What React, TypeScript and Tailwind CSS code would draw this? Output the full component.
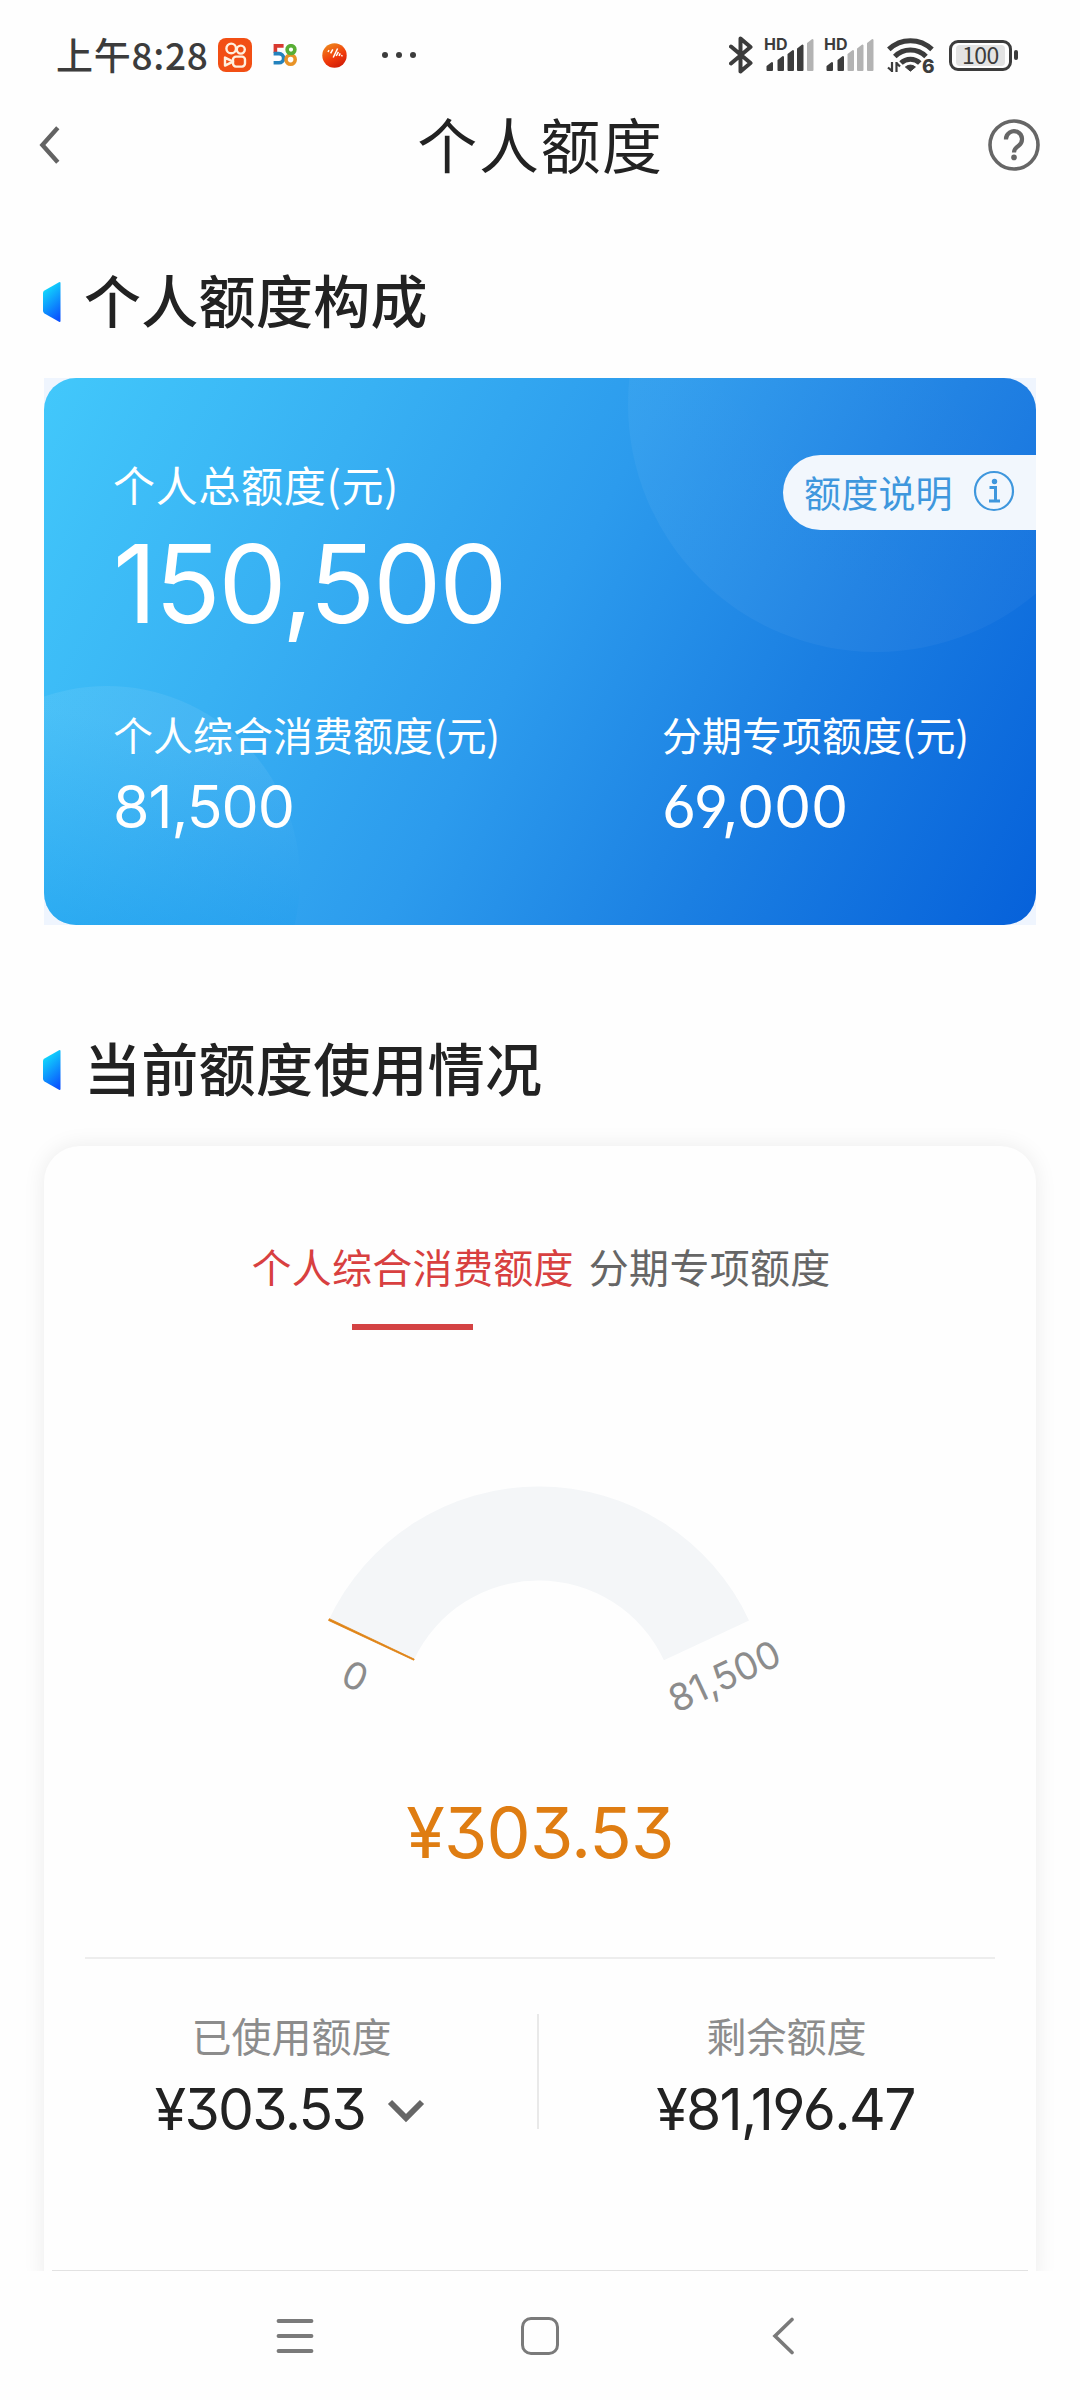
import { ChevronDown } from "lucide-react";

const cjk = "font-['Noto_Sans_CJK_SC',sans-serif]";
const num = "font-[Inter,'Noto_Sans_CJK_SC',sans-serif] [font-feature-settings:'cv03','cv04','cv09']";

const USED = 303.53;
const TOTAL = 81500;

function KuaishouIcon() {
  return (
    <svg width="34" height="34" viewBox="0 0 34 34" fill="none">
      <rect width="34" height="34" rx="8" fill="#f24f14" />
      <g stroke="#fff0de" strokeWidth="2.4">
        <circle cx="13.2" cy="10.4" r="4.8" />
        <circle cx="22.8" cy="11.6" r="4" />
        <rect x="15" y="18.6" width="12" height="10" rx="3" />
        <path d="M15 23.6 7 19.6v8Z" strokeLinejoin="round" />
      </g>
    </svg>
  );
}

function App58Icon() {
  return (
    <svg width="24" height="22" viewBox="0 0 24 22" fill="none" strokeWidth="3.6">
      <path d="M10.6 1.9H2.4V9" stroke="#d8392f" />
      <path d="M.6 9.6h5.4a4.6 4.6 0 0 1 0 9.2H.6" stroke="#2382bd" />
      <circle cx="17.6" cy="15.6" r="4.6" stroke="#e89327" />
      <circle cx="18" cy="5.6" r="3.9" stroke="#58ae35" />
    </svg>
  );
}

function BallIcon() {
  return (
    <svg width="25" height="25" viewBox="0 0 25 25">
      <defs>
        <linearGradient id="ball" x1="0.2" y1="0" x2="0.7" y2="1">
          <stop offset="0" stopColor="#ee8a1d" />
          <stop offset="0.6" stopColor="#f0380a" />
          <stop offset="1" stopColor="#cf1c08" />
        </linearGradient>
      </defs>
      <circle cx="12.5" cy="12.5" r="12.2" fill="url(#ball)" />
      <path d="m6 9 1-1.8M8.6 10.4l2.2-4M11.2 14.5l4.4-9M14.2 13l2.2-4.2M17 12.8l1.2-2.4M19.6 13.4l.6-1.2" stroke="#fff" strokeWidth="1.5" />
    </svg>
  );
}

function BluetoothIcon() {
  return (
    <svg width="24" height="38" viewBox="0 0 24 38" fill="none" stroke="#3c3c3c" strokeWidth="4" strokeLinejoin="round" strokeLinecap="round">
      <path d="M2 10.5 21.5 27 11.5 35.5V2.5L21.5 11 2 27.5" />
    </svg>
  );
}

const BARS = [
  { x: 2.5, y: 24 },
  { x: 13.5, y: 18 },
  { x: 23.5, y: 12 },
  { x: 33, y: 6.5 },
  { x: 43, y: 1 },
];

function Signal({ level }: { level: number }) {
  return (
    <div className="relative h-[34px] w-[50px]">
      <svg width="50" height="34" viewBox="0 0 50 34" strokeWidth="2" strokeLinejoin="round">
        {BARS.map((b, i) => (
          <path
            key={b.x}
            d={`M${b.x} 32V${b.y + 4.5}L${b.x + 4.5} ${b.y + 1}V32Z`}
            fill={i < level ? "#3c3c3c" : "#b3b3b3"}
            stroke={i < level ? "#3c3c3c" : "#b3b3b3"}
          />
        ))}
      </svg>
      <span className="absolute -left-px -top-[4px] font-[Inter,sans-serif] text-[16px] font-bold leading-[20px] text-[#3c3c3c]">HD</span>
    </div>
  );
}

function WifiIcon() {
  return (
    <div className="relative h-[38px] w-[48px]">
      <svg width="48" height="38" viewBox="0 0 48 38" fill="none">
        <g stroke="#3c3c3c" strokeWidth="5">
          <path d="M1.8 13.4a31 31 0 0 1 43.2 0" />
          <path d="M7.8 20.6a22 22 0 0 1 31.2 0" />
          <path d="M14 27a13.5 13.5 0 0 1 18.8 0" />
        </g>
        <path d="M23.4 35.2 18.4 31a7.5 7.5 0 0 1 10 0Z" fill="#3c3c3c" stroke="#3c3c3c" strokeLinejoin="round" />
        <path d="M5 26v10M1 31.5l4 3.5M9.5 36V26M13 30.5l-3.5-3.5" stroke="#3c3c3c" strokeWidth="2.2" />
      </svg>
      <span className="absolute left-[35px] top-[19px] font-[Inter,sans-serif] text-[19px] font-extrabold leading-[24px] text-[#3c3c3c]">6</span>
    </div>
  );
}

function Battery() {
  return (
    <div className="flex items-center gap-[2px]">
      <div className="flex h-[31px] w-[63px] items-center rounded-[9px] border-[3px] border-[#3c3c3c] px-[4px] py-[2px]">
        <div className={`flex h-full w-full items-center justify-center rounded-[4px] bg-[#e3e3e3] text-[23px] leading-none tracking-[-0.5px] text-[#3c3c3c] ${cjk}`}>
          <span className="-mt-px">100</span>
        </div>
      </div>
      <div className="h-[10px] w-1 rounded-sm bg-[#3c3c3c]" />
    </div>
  );
}

function StatusBar() {
  return (
    <div className="flex h-[110px] items-start pl-[56px] pr-[62px]">
      <div className={`mt-[28px] w-[162px] whitespace-nowrap text-[37px] font-medium leading-[52px] tracking-[0.7px] text-[#3c3c3c] ${cjk}`}>上午8:28</div>
      <div className="mt-[38px] flex h-[34px] items-center">
        <KuaishouIcon />
        <div className="ml-[21px]"><App58Icon /></div>
        <div className="ml-[25px]"><BallIcon /></div>
        <div className="ml-[35px] flex gap-2">
          <i className="h-[6px] w-[6px] rounded-full bg-[#3c3c3c]" />
          <i className="h-[6px] w-[6px] rounded-full bg-[#3c3c3c]" />
          <i className="h-[6px] w-[6px] rounded-full bg-[#3c3c3c]" />
        </div>
      </div>
      <div className="ml-auto mt-[36px] flex h-[38px] items-center">
        <BluetoothIcon />
        <div className="ml-[12px]"><Signal level={4} /></div>
        <div className="ml-[10px]"><Signal level={2} /></div>
        <div className="ml-[12px]"><WifiIcon /></div>
        <div className="ml-[14px]"><Battery /></div>
      </div>
    </div>
  );
}

function Header() {
  return (
    <div className="flex h-[70px] items-center justify-between pl-[38px] pr-[40px]">
      <svg width="52" height="40" viewBox="0 0 52 40" fill="none" stroke="#636363" strokeWidth="4.4">
        <path d="M19.8 2.8 4.4 20l15.4 17.2" />
      </svg>
      <h1 className={`-mt-[4px] ml-[3px] text-[60px] leading-[70px] tracking-[1.6px] text-[#222] ${cjk}`}>个人额度</h1>
      <svg width="52" height="52" viewBox="0 0 52 52" fill="none" stroke="#666" strokeWidth="3.6">
        <circle cx="26" cy="26" r="24" />
        <path d="M18 20.5a8 8 0 1 1 12.6 6.2C27.2 29 26 30.5 26 33.5" strokeWidth="4.2" />
        <circle cx="26" cy="38.4" r="2.8" fill="#666" stroke="none" />
      </svg>
    </div>
  );
}

function SectionTitle({ id, children }: { id: string; children: string }) {
  return (
    <div className="flex h-[70px] items-center pl-[43px]">
      <svg className="mt-[2px]" width="18" height="42" viewBox="0 0 18 42">
        <defs>
          <linearGradient id={id} x1="0.3" y1="0" x2="0.7" y2="1">
            <stop offset="0" stopColor="#12e4fb" />
            <stop offset="1" stopColor="#0a52ff" />
          </linearGradient>
        </defs>
        <path d="M1.5 9.6 16 1.2Q17.5.6 17.5 2V40Q17.5 41.4 16 40.8L1.5 32.4Q0 31.5 0 30V12Q0 10.5 1.5 9.6Z" fill={`url(#${id})`} />
      </svg>
      <h2 className={`-mt-[7px] ml-[23px] text-[57px] font-medium leading-[70px] tracking-[0.3px] text-[#222] ${cjk}`}>{children}</h2>
    </div>
  );
}

function LimitCard() {
  return (
    <div className="mx-[44px] mt-[42px] bg-[#eff5fe]">
      <div className="relative h-[547px] overflow-hidden rounded-[32px] bg-[linear-gradient(118deg,#42c8fb_0%,#38b1f3_26%,#2c9bed_49%,#1b7fe2_72%,#0661da_100%)] text-white">
        <div className="absolute left-[584px] top-[-222px] h-[496px] w-[496px] rounded-full bg-[linear-gradient(60deg,#ffffff0c,#ffffff06)]" />
        <div className="absolute left-[-130px] top-[308px] h-[386px] w-[386px] rounded-full bg-[linear-gradient(190deg,#ffffff12_15%,#0a96ec48_62%)]" />
        <div className="relative flex justify-between pl-[69px]">
          <div className="pt-[76px]">
            <p className={`text-[42px] leading-[60px] tracking-[0.7px] ${cjk}`}>个人总额度(元)</p>
            <p className={`mt-[6px] text-[108px] leading-[128px] tracking-[-2px] ${num}`}>150,500</p>
          </div>
          <div className="mt-[77px] flex h-[75px] w-[253px] items-center rounded-l-full bg-[#f2f7fd] pl-[21px] text-[#3f97dd]">
            <span className={`text-[37px] leading-none tracking-[0.2px] ${cjk}`}>额度说明</span>
            <svg className="-mt-[3px] ml-[20px]" width="42" height="42" viewBox="0 0 42 42">
              <circle cx="21" cy="21" r="19" fill="none" stroke="currentColor" strokeWidth="2.2" />
              <circle cx="21.5" cy="11.5" r="2.7" fill="currentColor" />
              <path d="M16.5 17.5h6v13.3M16 31h11" fill="none" stroke="currentColor" strokeWidth="3" />
            </svg>
          </div>
        </div>
        <div className="relative mt-[56px] flex pl-[69px]">
          <div className="w-[549px]">
            <p className={`text-[40px] leading-[60px] ${cjk}`}>个人综合消费额度(元)</p>
            <p className={`mt-[3px] text-[59px] leading-[80px] tracking-[-1px] ${num}`}>81,500</p>
          </div>
          <div>
            <p className={`text-[40px] leading-[60px] ${cjk}`}>分期专项额度(元)</p>
            <p className={`mt-[3px] text-[59px] leading-[80px] tracking-[-0.3px] ${num}`}>69,000</p>
          </div>
        </div>
      </div>
    </div>
  );
}

function polar(r: number, deg: number) {
  const a = (deg * Math.PI) / 180;
  return `${228.8 + r * Math.cos(a)} ${231.5 - r * Math.sin(a)}`;
}

function Gauge() {
  const end = 155 - (USED / TOTAL) * 130;
  return (
    <svg className="mx-auto mt-[157px] block" width="460" height="240" viewBox="0 0 460 240" overflow="visible">
      <path d={`M${polar(232, 155)}A232 232 0 0 1 ${polar(232, 25)}L${polar(138, 25)}A138 138 0 0 0 ${polar(138, 155)}Z`} fill="#f4f6f8" />
      <path d={`M${polar(232, 155)}L${polar(232, end)}L${polar(138, end)}L${polar(138, 155)}Z`} fill="#e08416" stroke="#e08416" strokeWidth="0.8" />
      <g fill="#8c8c8c" fontSize="37.5" fontFamily="Inter, sans-serif" textAnchor="middle">
        <text transform="translate(45 189.5) rotate(25)" y="13">0</text>
        <text transform="translate(414.5 189.5) rotate(-25)" y="13">81,500</text>
      </g>
    </svg>
  );
}

function UsageCard() {
  return (
    <div className="mt-[21px] h-[1146px] overflow-hidden px-[44px] pt-[21px]">
      <div className="h-[1160px] rounded-[36px] bg-[#fefefe] shadow-[0_0_22px_rgba(0,0,0,0.08)]">
        <div className={`flex justify-center gap-[15px] pl-[2px] pt-[90px] text-[40px] leading-[60px] tracking-[0.3px] ${cjk}`}>
          <div className="flex flex-col items-center text-[#d84040]">
            个人综合消费额度
            <div className="mt-[28px] h-[6px] w-[121px] bg-[#d44243]" />
          </div>
          <div className="text-[#666]">分期专项额度</div>
        </div>
        <Gauge />
        <p className={`mt-[61px] text-center text-[70px] leading-[90px] tracking-[-0.8px] text-[#df7d12] ${num}`}>¥303.53</p>
        <div className="mx-[41px] mt-[79px] h-[2px] bg-[#ededed]" />
        <div className="flex pr-[4px] pt-[46px] text-center">
          <div className="flex-1">
            <p className={`pl-[2px] text-[40px] leading-[60px] text-[#8c8c8c] ${cjk}`}>已使用额度</p>
            <div className="mt-[3px] flex items-center justify-center pl-[12px]">
              <span className={`text-[57px] leading-[84px] tracking-[-1.7px] text-[#222] ${num}`}>¥303.53</span>
              <ChevronDown className="ml-[9px]" size={64} color="#666" strokeWidth={2.2} strokeLinecap="butt" strokeLinejoin="miter" />
            </div>
          </div>
          <div className="mt-[9px] h-[115px] w-[2px] bg-[#e9e9e9]" />
          <div className="flex-1">
            <p className={`pl-[2px] text-[40px] leading-[60px] text-[#8c8c8c] ${cjk}`}>剩余额度</p>
            <p className={`mt-[3px] text-[57px] leading-[84px] tracking-[-1.7px] text-[#222] ${num}`}>¥81,196.47</p>
          </div>
        </div>
      </div>
    </div>
  );
}

function NavBar() {
  return (
    <div className="flex h-[129px] items-center justify-center gap-[207px] text-[#7a7a7a]">
      <svg width="38" height="38" viewBox="0 0 38 38" stroke="currentColor" strokeWidth="3.8" strokeLinecap="round">
        <path d="M2.5 4h33M2.5 19h33M2.5 34h33" />
      </svg>
      <div className="h-[38px] w-[38px] rounded-[10px] border-[3.5px] border-[#7a7a7a]" />
      <svg width="38" height="38" viewBox="0 0 38 38" fill="none" stroke="currentColor" strokeWidth="3.6" strokeLinecap="round">
        <path d="M26 2.5 9 19 26 35.5" />
      </svg>
    </div>
  );
}

export default function App() {
  return (
    <div className="h-[2400px] w-[1080px] overflow-hidden bg-[#fefefe]">
      <StatusBar />
      <Header />
      <div className="mt-[86px]">
        <SectionTitle id="m1">个人额度构成</SectionTitle>
      </div>
      <LimitCard />
      <div className="mt-[109px]">
        <SectionTitle id="m2">当前额度使用情况</SectionTitle>
      </div>
      <UsageCard />
      <div className="mx-[52px] -mt-px h-px bg-[#e2e2e2]" />
      <NavBar />
    </div>
  );
}
